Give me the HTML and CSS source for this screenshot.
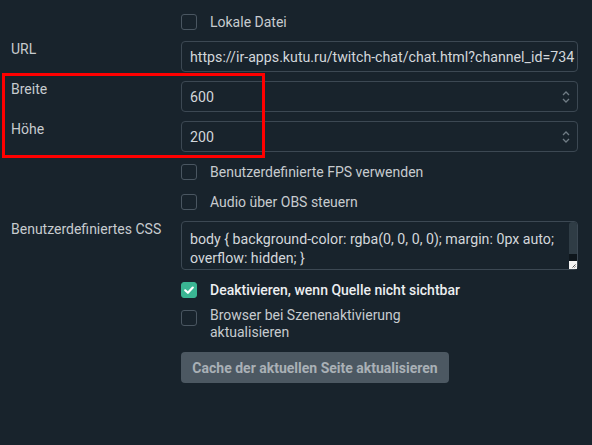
FILE: index.html
```html
<!DOCTYPE html>
<html lang="de">
<head>
<meta charset="utf-8">
<title>Eigenschaften – Browserquelle</title>
<link rel="stylesheet" href="styles.css">
</head>
<body>
<div class="form">
  <div class="label"></div>
  <label class="check row-lokal"><span class="box"></span><span class="check-text">Lokale Datei</span></label>

  <div class="label">URL</div>
  <div class="field"><span class="field-text">https://ir-apps.kutu.ru/twitch-chat/chat.html?channel_id=734</span></div>

  <div class="label">Breite</div>
  <div class="field spin"><span class="field-text">600</span>
    <svg class="spin-arrows" viewBox="0 0 10 16" width="10" height="16"><path d="M2 6 L5 3 L8 6 M2 10 L5 13 L8 10" fill="none" stroke="#6f7b84" stroke-width="1.3"/></svg>
  </div>

  <div class="label">Höhe</div>
  <div class="field spin"><span class="field-text">200</span>
    <svg class="spin-arrows" viewBox="0 0 10 16" width="10" height="16"><path d="M2 6 L5 3 L8 6 M2 10 L5 13 L8 10" fill="none" stroke="#6f7b84" stroke-width="1.3"/></svg>
  </div>

  <div class="label"></div>
  <label class="check"><span class="box"></span><span class="check-text">Benutzerdefinierte FPS verwenden</span></label>

  <div class="label row-audio"></div>
  <label class="check row-audio"><span class="box"></span><span class="check-text">Audio über OBS steuern</span></label>

  <div class="label row-css">Benutzerdefiniertes CSS</div>
  <div class="textarea row-css">
    <div class="textarea-text">body { background-color: rgba(0, 0, 0, 0); margin: 0px auto;<br>overflow: hidden; }</div>
    <div class="scrollbar"><span class="thumb"></span><span class="track-end"></span></div>
    <span class="grip"><svg viewBox="0 0 8 8" width="8" height="8"><path d="M6.5 3.5 L3.5 6.5 M6.5 5.5 L5.5 6.5" stroke="#555" stroke-width="1"/></svg></span>
  </div>

  <div class="label"></div>
  <label class="check checked"><span class="box"><svg viewBox="0 0 16 16" width="16" height="16"><path d="M4.2 8.3 L6.9 10.8 L11.8 5.6" fill="none" stroke="#fff" stroke-width="2.2" stroke-linecap="round" stroke-linejoin="round"/></svg></span><span class="check-text">Deaktivieren, wenn Quelle nicht sichtbar</span></label>

  <div class="label row-multi"></div>
  <label class="check check-multi row-multi"><span class="box"></span><span class="check-text">Browser bei Szenenaktivierung<br>aktualisieren</span></label>

  <div class="label row-actions"></div>
  <div class="actions row-actions"><button class="btn" type="button">Cache der aktuellen Seite aktualisieren</button></div>
</div>
<div class="highlight"></div>
</body>
</html>
```

FILE: styles.css
```css
html, body {
  margin: 0;
  padding: 0;
  background: #18232c;
  height: 100%;
}

body {
  font-family: Roboto, "Liberation Sans", sans-serif;
  font-size: 14px;
  color: #cfd3d7;
  position: relative;
  overflow: hidden;
}

.form {
  display: grid;
  grid-template-columns: 181px 397px;
  row-gap: 9px;
  padding-top: 11px;
}

.label {
  padding-left: 11px;
  color: #c7cbcf;
  font-size: 14px;
  line-height: 16px;
}

.row-lokal { margin-bottom: -1px; }
.row-audio { margin-top: -1px; }
.row-css { margin-top: -1px; }
.row-multi { margin-top: -3px; }
.row-actions { margin-top: 2px; }

.check {
  display: flex;
  align-items: center;
  gap: 13px;
  height: 22px;
  color: #c7cbcf;
}

.box {
  width: 16px;
  height: 16px;
  box-sizing: border-box;
  border: 1px solid #4a5661;
  border-radius: 3px;
  flex: none;
  display: flex;
}

.checked .box {
  background: #3ab593;
  border-color: #3ab593;
}

.checked .box svg {
  margin: -1px;
}

.checked .check-text {
  color: #eceef0;
  font-weight: 500;
}

.check-multi {
  align-items: flex-start;
  height: auto;
  line-height: 17px;
}

.check-multi .box {
  margin-top: 3px;
}

.field {
  height: 31px;
  box-sizing: border-box;
  border: 1px solid #3c4853;
  border-radius: 4px;
  display: flex;
  align-items: center;
  padding: 0 8px;
  color: #d3d7db;
  font-size: 14.2px;
  white-space: nowrap;
  overflow: hidden;
}

.spin {
  justify-content: space-between;
}

.spin-arrows {
  flex: none;
  margin-right: -2px;
}

.textarea {
  position: relative;
  height: 49px;
  box-sizing: border-box;
  border: 1px solid #3c4853;
  border-radius: 4px;
  display: flex;
}

.textarea-text {
  flex: 1;
  padding: 8px 0 0 8px;
  line-height: 19px;
  color: #d3d7db;
  font-size: 14.2px;
  white-space: nowrap;
  overflow: hidden;
}

.scrollbar {
  width: 8px;
  display: flex;
  flex-direction: column;
}

.thumb {
  height: 32px;
  background: #2f3c45;
  border-radius: 3px 3px 0 0;
}

.track-end {
  flex: 1;
  background: #0e161c;
  margin-bottom: 8px;
}

.grip {
  position: absolute;
  right: 0;
  bottom: 0;
  width: 8px;
  height: 8px;
  background: #f4f4f4;
  display: flex;
}

.btn {
  font-family: Roboto, "Liberation Sans", sans-serif;
  font-size: 14px;
  font-weight: 700;
  color: #a9b0b6;
  background: #4c5862;
  border: none;
  border-radius: 4px;
  height: 31px;
  width: 268px;
  padding: 0;
}

/* red annotation frame around the size fields */
.highlight {
  position: absolute;
  left: 2px;
  top: 73px;
  width: 263px;
  height: 85px;
  box-sizing: border-box;
  border: 3px solid #ff0000;
}
```
